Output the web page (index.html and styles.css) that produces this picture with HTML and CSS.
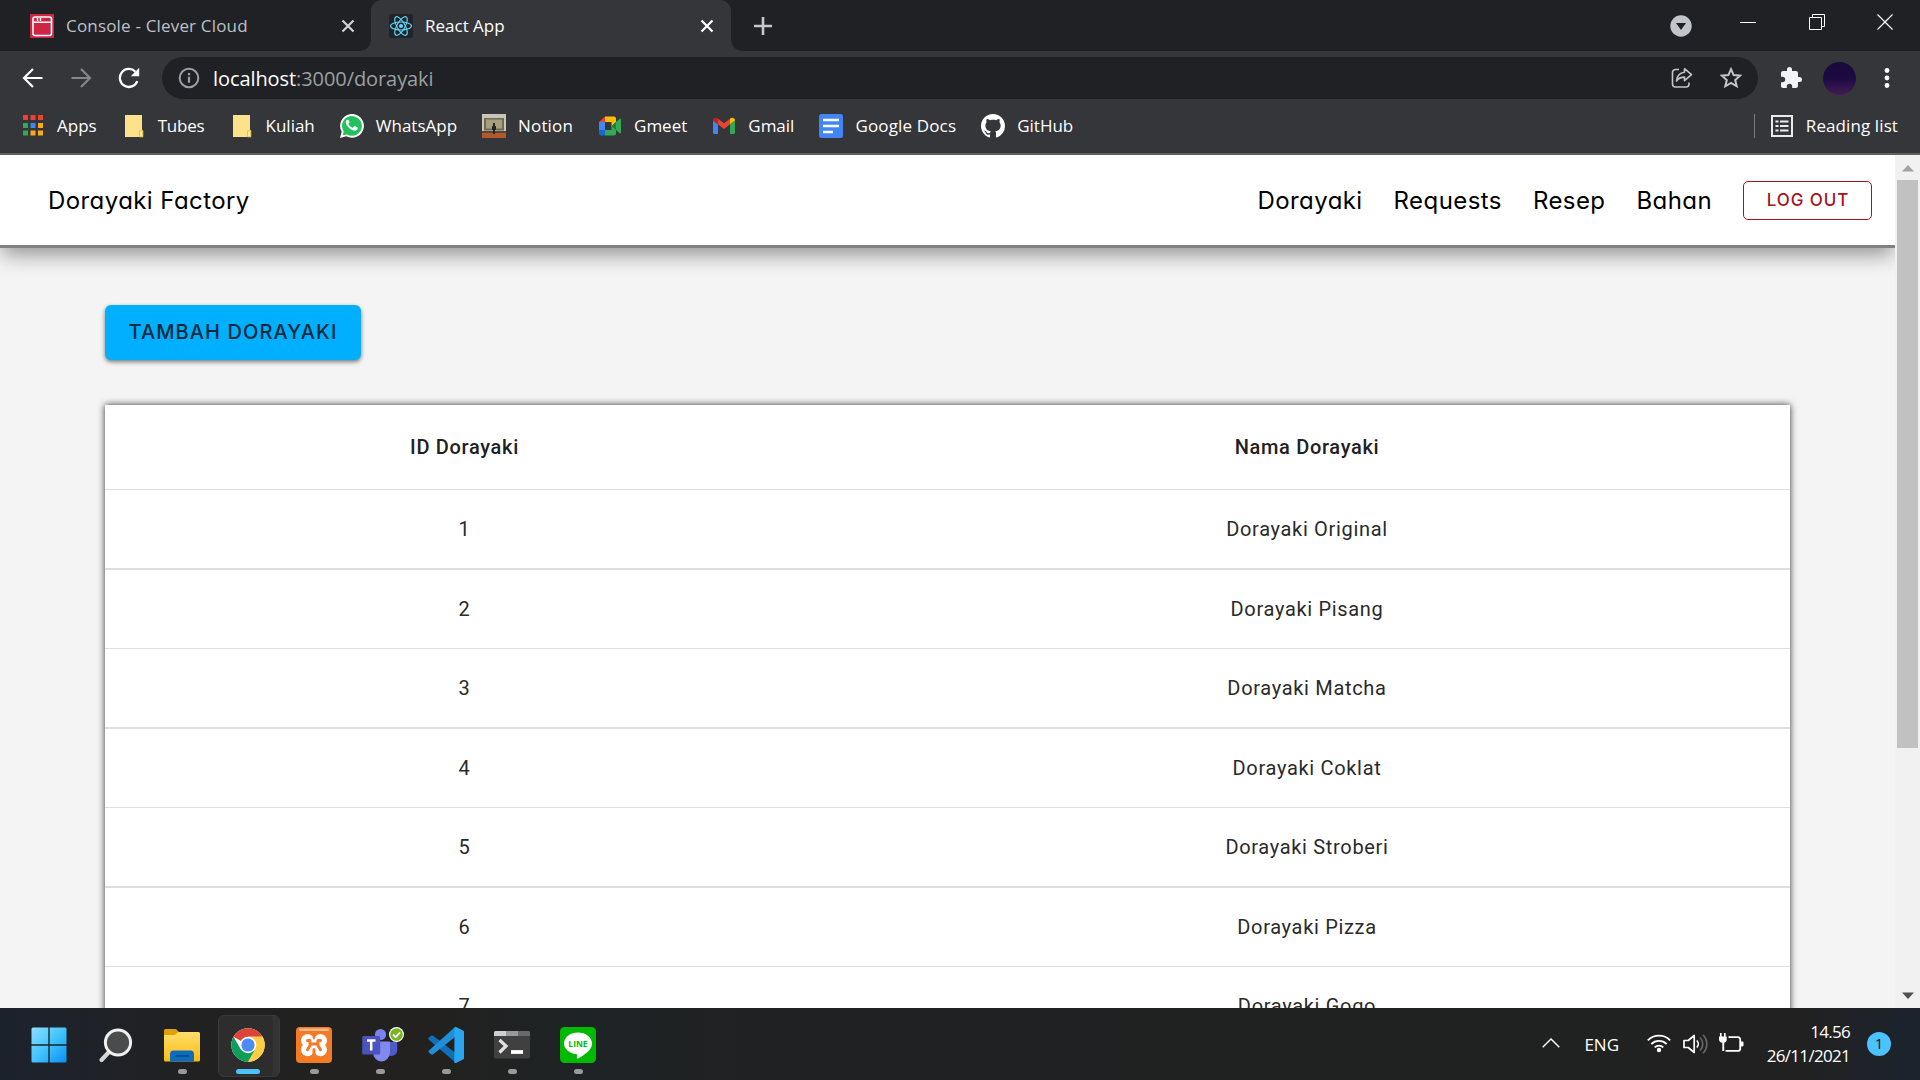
FILE: index.html
```html
<!DOCTYPE html>
<html lang="en">
<head>
<meta charset="utf-8">
<title>React App</title>
<link rel="stylesheet" href="styles.css">
</head>
<body>
<div class="screen">
  <header class="chrome">
    <div class="tabstrip">
      <div class="tab tab-idle">
        <svg class="favicon" viewBox="0 0 24 24"><rect width="24" height="24" fill="#ce2545"/><rect x="3" y="3" width="18.500" height="18.500" rx="2" fill="none" stroke="#fff" stroke-width="1.600"/><path d="M3 8.200h18.500M7.500 4v3M10.500 4v3" stroke="#fff" stroke-width="1.400"/></svg>
        <span class="tab-title title-console">Console - Clever Cloud</span>
        <svg class="tab-close" viewBox="0 0 14 14"><path d="M1.500 1.500l11 11M12.500 1.500l-11 11" stroke="#d0d2d5" stroke-width="2.200"/></svg>
      </div>
      <div class="tab tab-active">
        <svg class="favicon" viewBox="0 0 24 24"><rect width="24" height="24" rx="3" fill="#20232a"/><g fill="none" stroke="#61dafb" stroke-width="1.100"><ellipse cx="12" cy="12" rx="10.500" ry="4"/><ellipse cx="12" cy="12" rx="10.500" ry="4" transform="rotate(60 12 12)"/><ellipse cx="12" cy="12" rx="10.500" ry="4" transform="rotate(120 12 12)"/></g><circle cx="12" cy="12" r="2" fill="#61dafb"/></svg>
        <span class="tab-title title-react">React App</span>
        <svg class="tab-close" viewBox="0 0 14 14"><path d="M1.500 1.500l11 11M12.500 1.500l-11 11" stroke="#fff" stroke-width="2.200"/></svg>
      </div>
      <svg class="new-tab" viewBox="0 0 20 20"><path d="M10 1v18M1 10h18" stroke="#c6c8cc" stroke-width="2.600"/></svg>
      <div class="window-controls">
        <svg class="tab-search" viewBox="0 0 22 22"><circle cx="11" cy="11" r="10.700" fill="#c1c4c9"/><path d="M6 8h10l-5 7z" fill="#202124"/></svg>
        <svg class="win-btn" viewBox="0 0 16 16"><path d="M0 8.500h16" stroke="#fff"/></svg>
        <svg class="win-btn" viewBox="0 0 16 16"><path d="M.5 3.500h12v12H.5zM3.500 3.500v-3h12v12h-3" fill="none" stroke="#fff"/></svg>
        <svg class="win-btn" viewBox="0 0 16 16"><path d="M.5.5l15 15M15.500.5l-15 15" stroke="#fff" stroke-width="1.200"/></svg>
      </div>
    </div>
    <div class="toolbar">
      <svg class="nav-icon" viewBox="0 0 22 22"><path d="M20.500 11H2.500M11 2L2 11l9 9" fill="none" stroke="#fff" stroke-width="2.200"/></svg>
      <svg class="nav-icon" viewBox="0 0 22 22"><path d="M1.500 11h18M11 2l9 9-9 9" fill="none" stroke="#85878a" stroke-width="2.200"/></svg>
      <svg class="nav-icon" viewBox="0 0 22 22"><path d="M19.300 14.200A9 9 0 1 1 17.400 4.700" fill="none" stroke="#fff" stroke-width="2.300"/><path d="M21.200.8v8.400h-8.400z" fill="#fff"/></svg>
      <div class="omnibox">
        <svg class="info" viewBox="0 0 22 22"><circle cx="11" cy="11" r="9.300" fill="none" stroke="#9aa0a6" stroke-width="2"/><path d="M11 9.800v6M11 6v2.200" stroke="#9aa0a6" stroke-width="2.200"/></svg>
        <span class="url"><span class="host">localhost</span><span class="path">:3000/dorayaki</span></span>
        <svg class="omni-icon" viewBox="0 0 22 22"><path d="M8 2.500H4.500a3 3 0 0 0-3 3V17a3 3 0 0 0 3 3H15a3 3 0 0 0 3-3v-1.500" fill="none" stroke="#c3c5c8" stroke-width="1.600"/><path d="M13.500 1.700l7 6-7 6v-3.600c-4 0-6.300 1.200-8 3.900.4-4.700 3-8 8-8.700z" fill="none" stroke="#c3c5c8" stroke-width="1.600" stroke-linejoin="round"/></svg>
        <svg class="omni-icon" viewBox="0 0 22 22"><path d="M11 2.200l2.600 5.900 6.500.6-4.900 4.300 1.500 6.300-5.700-3.400-5.700 3.400 1.500-6.300L1.900 8.700l6.500-.6z" fill="none" stroke="#c3c5c8" stroke-width="2"/></svg>
      </div>
      <svg class="ext" viewBox="0 0 24 24"><path d="M20.500 11H19V7c0-1.100-.9-2-2-2h-4V3.500a2.500 2.500 0 0 0-5 0V5H4c-1.100 0-2 .9-2 2v3.800h1.500a2.700 2.700 0 0 1 0 5.400H2V20c0 1.100.9 2 2 2h3.800v-1.500a2.700 2.700 0 0 1 5.400 0V22H17c1.100 0 2-.9 2-2v-4h1.500a2.500 2.500 0 0 0 0-5z" fill="#f1f3f4"/></svg>
      <span class="avatar"></span>
      <svg class="menu" viewBox="0 0 6 22"><g fill="#fff"><circle cx="3" cy="3.500" r="2.400"/><circle cx="3" cy="11" r="2.400"/><circle cx="3" cy="18.500" r="2.400"/></g></svg>
    </div>
    <nav class="bookmarks">
      <a class="bm bm-apps"><svg viewBox="0 0 24 24"><g fill="#ea4335"><path d="M2 1h5v5H2zM9.500 1h5v5h-5zM17 1h5v5h-5z"/></g><path d="M2 9h5v5H2zM2 16.500h5v5H2z" fill="#34a853"/><path d="M9.500 9h5v5h-5z" fill="#4285f4"/><path d="M17 9h5v5h-5zM9.500 16.500h5v5h-5zM17 16.500h5v5h-5z" fill="#fbab18"/></svg><span>Apps</span></a>
      <a class="bm bm-tubes"><svg viewBox="0 0 24 24"><path d="M3 1h17v14.500l1 1V23H3z" fill="#fce28a"/><path d="M17.500 22.800v-6h3.300v6z" fill="#fde9a0" stroke="#e9c147"/></svg><span>Tubes</span></a>
      <a class="bm bm-kuliah"><svg viewBox="0 0 24 24"><path d="M3 1h17v14.500l1 1V23H3z" fill="#fce28a"/><path d="M17.500 22.800v-6h3.300v6z" fill="#fde9a0" stroke="#e9c147"/></svg><span>Kuliah</span></a>
      <a class="bm bm-wa"><svg viewBox="0 0 24 24"><path d="M0 24l1.700-6.200A11.900 11.900 0 1 1 6.300 22.300z" fill="#fff"/><path d="M2.700 21.300l1-3.900A9.900 9.900 0 1 1 7 20.500z" fill="#22c15e"/><path d="M8.700 6.400c-.3-.6-.5-.6-.9-.6-1.200 0-2 1.300-2 2.600 0 1.600 1.200 3.400 3.200 5.300 2.400 2.200 4.300 2.900 5.700 2.900 1.500 0 2.900-.9 3-2.200.1-.8 0-.9-.5-1.100l-2.400-1.100c-.4-.2-.6-.1-.8.2l-1 1.200c-.2.3-.4.300-.8.100-1.500-.7-2.900-1.900-3.700-3.400-.2-.4-.1-.5.100-.7l.9-1.100c.1-.2.100-.4 0-.6z" fill="#fff"/></svg><span>WhatsApp</span></a>
      <a class="bm bm-notion"><svg viewBox="0 0 24 24"><rect width="24" height="24" fill="#c9c5b8"/><rect x="2" y="4" width="20" height="12.500" fill="#6f6a52"/><rect x="4" y="5.500" width="16" height="9" fill="#a79f7c"/><path d="M0 19h24v5H0z" fill="#b4582a"/><path d="M0 17h24v2H0z" fill="#55483b"/><path d="M11 9h2v3h1v4h-1v4h-2v-4h-1v-4h1z" fill="#27242a"/></svg><span>Notion</span></a>
      <a class="bm bm-meet"><svg viewBox="0 0 24 24"><path d="M1 8l6-5.500V8z" fill="#ea4335"/><path d="M7 2.500h9c1 0 2 .8 2 2V9l-4.500 4V8H7z" fill="#fbbc04"/><path d="M1 8h6v8H1z" fill="#4285f4"/><path d="M1 16h6v5.500H3c-1.200 0-2-.8-2-2z" fill="#1967d2"/><path d="M7 16h6.500v-4L18 15v4.500c0 1.200-.9 2-2 2H7z" fill="#34a853"/><path d="M13.500 12L21.700 4.800c.6-.5 1.300-.2 1.300.6v13.200c0 .8-.7 1.100-1.300.6z" fill="#34a853"/><path d="M13.500 12L18 8v8z" fill="#188038"/></svg><span>Gmeet</span></a>
      <a class="bm bm-gmail"><svg viewBox="0 0 24 24"><path d="M1 6.500l5 3.800V20H2.500A1.500 1.500 0 0 1 1 18.500z" fill="#4285f4"/><path d="M18 10.300l5-3.800v12a1.500 1.500 0 0 1-1.500 1.500H18z" fill="#34a853"/><path d="M1 6.500C1 4 3.700 3 5.500 4.300L6 4.700v5.600L1 6.500z" fill="#c5221f"/><path d="M6 4.700l6 4.600 6-4.600v5.600L12 15l-6-4.700z" fill="#ea4335"/><path d="M18 4.700l.5-.4C20.300 3 23 4 23 6.500l-5 3.800z" fill="#fbbc04"/></svg><span>Gmail</span></a>
      <a class="bm bm-docs"><svg viewBox="0 0 24 24"><rect width="24" height="24" rx="2.500" fill="#4285f4"/><path d="M4 6h16M4 12h16M4 18h10" stroke="#fff" stroke-width="2.600"/></svg><span>Google Docs</span></a>
      <a class="bm bm-github"><svg viewBox="0 0 16 16"><path fill="#fff" d="M8 0C3.580 0 0 3.580 0 8c0 3.540 2.290 6.530 5.470 7.590.4.070.55-.17.55-.38 0-.19-.01-.82-.01-1.490-2.010.37-2.530-.49-2.690-.94-.09-.23-.48-.94-.82-1.130-.28-.15-.68-.52-.01-.53.63-.01 1.080.58 1.230.82.72 1.210 1.870.87 2.330.66.070-.52.28-.87.51-1.070-1.780-.2-3.640-.89-3.640-3.950 0-.87.31-1.590.82-2.150-.08-.2-.36-1.020.08-2.120 0 0 .67-.21 2.200.82.64-.18 1.320-.27 2-.27s1.360.09 2 .27c1.530-1.040 2.200-.82 2.200-.82.44 1.100.16 1.920.08 2.120.51.56.82 1.270.82 2.150 0 3.070-1.870 3.750-3.650 3.950.29.25.54.73.54 1.480 0 1.070-.01 1.930-.01 2.200 0 .21.15.46.55.38A8.010 8.010 0 0 0 16 8c0-4.420-3.580-8-8-8z"/></svg><span>GitHub</span></a>
      <a class="bm bm-reading"><svg viewBox="0 0 24 24"><rect x="2" y="2" width="20" height="20" fill="none" stroke="#e8eaed" stroke-width="2"/><path d="M5.500 7.500h3M5.500 12h3M5.500 16.500h3M10 7.500h8.500M10 12h8.500M10 16.500h8.500" stroke="#e8eaed" stroke-width="2.200"/></svg><span>Reading list</span></a>
    </nav>
  </header>

  <div class="viewport">
    <div class="page">
      <div class="navbar">
        <span class="brand">Dorayaki Factory</span>
        <div class="links">
          <a>Dorayaki</a><a>Requests</a><a>Resep</a><a>Bahan</a>
          <button class="logout">LOG OUT</button>
        </div>
      </div>
      <main class="content">
        <button class="add">TAMBAH DORAYAKI</button>
        <div class="table">
          <div class="row head"><span>ID Dorayaki</span><span>Nama Dorayaki</span></div>
          <div class="row"><span>1</span><span>Dorayaki Original</span></div>
          <div class="row"><span>2</span><span>Dorayaki Pisang</span></div>
          <div class="row"><span>3</span><span>Dorayaki Matcha</span></div>
          <div class="row"><span>4</span><span>Dorayaki Coklat</span></div>
          <div class="row"><span>5</span><span>Dorayaki Stroberi</span></div>
          <div class="row"><span>6</span><span>Dorayaki Pizza</span></div>
          <div class="row"><span>7</span><span>Dorayaki Gogo</span></div>
        </div>
      </main>
    </div>
    <div class="scrollbar">
      <svg viewBox="0 0 12 7"><path d="M0 6.500L6 0l6 6.500z" fill="#a3a3a3"/></svg>
      <div class="thumb"></div>
      <svg class="down" viewBox="0 0 12 7"><path d="M0 .5L6 7l6-6.500z" fill="#505050"/></svg>
    </div>
  </div>

  <footer class="taskbar">
    <div class="apps">
      <div class="app start"><svg viewBox="0 0 36 36"><defs><linearGradient id="win" x1="0" y1="0" x2="1" y2="1"><stop offset="0" stop-color="#8fe0ff"/><stop offset=".55" stop-color="#3cc0fa"/><stop offset="1" stop-color="#0a8df5"/></linearGradient></defs><path d="M2 .5h15.300v16.800H.5V2A1.500 1.500 0 0 1 2 .5zM18.700.5H34A1.500 1.500 0 0 1 35.500 2v15.300H18.700zM.5 18.700h16.800v16.800H2A1.500 1.500 0 0 1 .5 34zM18.700 18.700h16.800V34a1.500 1.500 0 0 1-1.500 1.500H18.700z" fill="url(#win)"/></svg></div>
      <div class="app"><svg viewBox="0 0 36 36"><path d="M11 25l-7.500 8" stroke="#d6d6d6" stroke-width="4.200" stroke-linecap="round"/><circle cx="20" cy="15.500" r="12.600" fill="#4a4b4d" stroke="#f0f0f0" stroke-width="3"/></svg></div>
      <div class="app run"><svg viewBox="0 0 36 36"><defs><linearGradient id="fold" x1="0" y1="0" x2="0" y2="1"><stop offset="0" stop-color="#ffdf6c"/><stop offset="1" stop-color="#fbbc12"/></linearGradient></defs><path d="M0 3.500A1.500 1.500 0 0 1 1.500 2H11c1.500 0 2.500 1.500 4 3v5H0z" fill="#e0a00e"/><path d="M0 8h10.500c1.500 0 2.500-3 5-3H34.500A1.500 1.500 0 0 1 36 6.500V33a1.500 1.500 0 0 1-1.500 1.500h-33A1.500 1.500 0 0 1 0 33z" fill="url(#fold)"/><path d="M6 34.500V27a3.500 3.500 0 0 1 3.500-3.500h17A3.500 3.500 0 0 1 30 27v7.500z" fill="#0f6cbd"/><path d="M11 29h14" stroke="#0b4a8a" stroke-width="1.600"/></svg></div>
      <div class="app run current"><svg viewBox="0 0 36 36"><circle cx="18" cy="18" r="16.700" fill="#fff"/><path d="M18 18L3.540 9.650A16.700 16.700 0 0 1 32.460 9.650H18z" fill="#db4437"/><path d="M18 9.650h14.460A16.700 16.700 0 0 1 18 34.700l7.230-12.520z" fill="#ffcd40"/><path d="M25.230 22.180L18 34.700A16.700 16.700 0 0 1 3.540 9.650l7.230 12.530z" fill="#0f9d58"/><circle cx="18" cy="18" r="8.300" fill="#fff"/><circle cx="18" cy="18" r="6.600" fill="#4c8bf5"/></svg></div>
      <div class="app run"><svg viewBox="0 0 36 36"><rect width="36" height="36" rx="4" fill="#f47b26"/><path d="M3 1.500h30v1c0 1-1 1.500-2 1.500H5c-1 0-2-.5-2-1.500z" fill="#fbb88a"/><g fill="#fff"><circle cx="11.500" cy="13.500" r="6.500"/><circle cx="24.500" cy="13.500" r="6.500"/><circle cx="11.500" cy="22.700" r="6.500"/><circle cx="24.500" cy="22.700" r="6.500"/><path d="M10 12h16v12H10z"/></g><path d="M18 26v-3.500" stroke="#f47b26" stroke-width="3" stroke-linecap="round"/><path d="M11.500 13.500h2.500v3.500h8v-3.500h2.500" fill="none" stroke="#f47b26" stroke-width="3" stroke-linejoin="round" stroke-linecap="round"/><path d="M11.500 22.800l2.500-4.300M24.500 22.800L22 18.500" stroke="#f47b26" stroke-width="3" stroke-linecap="round"/><path d="M16.500 10h3l-1.500 3z" fill="#f47b26"/></svg></div>
      <div class="app run"><svg class="teams" viewBox="0 0 42 36"><circle cx="18.500" cy="7.500" r="5.600" fill="#7b83eb"/><path d="M26 15h9.300v8a6 6 0 0 1-9.300 5z" fill="#5059c9"/><path d="M11 14.500h17v10.500a8.500 9.500 0 0 1-17 0z" fill="#8189ee"/><rect x=".2" y="9" width="18" height="18.500" rx="1.500" fill="#4b53bc"/><path d="M5 13.500h8.500M9.200 13.500v10" stroke="#fff" stroke-width="2.500"/><circle cx="34.500" cy="7.500" r="7.500" fill="#fff"/><circle cx="34.500" cy="7.500" r="6.300" fill="#76b51b"/><path d="M31 7.500l2.600 2.600 4.500-4.700" fill="none" stroke="#fff" stroke-width="1.900"/></svg></div>
      <div class="app run"><svg viewBox="0 0 36 36"><path d="M1 10.500l2-1.700c.7-.6 1.500-.5 2.200 0L27 25.500V35L.8 12.800c-.7-.7-.5-1.700.2-2.300z" fill="#0f72b8"/><path d="M27 0v10L5.200 27.300c-.7.500-1.500.5-2.200 0l-2-1.700c-.7-.7-.7-1.500 0-2.200z" fill="#1f90d8"/><path d="M26.500.6c.4-.6 1-.7 1.600-.5L35 3.500c.7.300 1 .8 1 1.500v26c0 .7-.3 1.200-1 1.500L28 36c-.7.200-1.300 0-1.700-.5z" fill="#2aa5f2"/></svg></div>
      <div class="app run"><svg viewBox="0 0 36 36"><rect y="4" width="36" height="27.500" rx="1.500" fill="#404040"/><path d="M0 9V5.500A1.500 1.500 0 0 1 1.500 4H12v5z" fill="#cfcfcf"/><path d="M12 4h12v5H12z" fill="#999"/><path d="M24 4h10.500A1.500 1.500 0 0 1 36 5.500V9H24z" fill="#6a6a6a"/><path d="M5.500 13l6.500 6-6.500 6.500" fill="none" stroke="#e2e2e2" stroke-width="3.200"/><path d="M17 25h12" stroke="#fff" stroke-width="3.800"/></svg></div>
      <div class="app run"><svg viewBox="0 0 36 36"><rect width="36" height="36" rx="4.500" fill="#00b900"/><path d="M18 5.500c7.700 0 14 4.900 14 11 0 2.500-1 4.700-3 6.900-2.900 3.300-9.300 7.200-11 8-1.500.6-1.100-.4-1.100-.8l.2-1.900c0-.6 0-1.200-.7-1.400C9.500 26.400 4 22 4 16.500c0-6.100 6.300-11 14-11z" fill="#fff"/><text x="18" y="20" text-anchor="middle" class="line-logo">LINE</text></svg></div>
    </div>
    <div class="tray">
      <svg class="t-chev" viewBox="0 0 18 10"><path d="M.7 9.300L9 1l8.300 8.300" fill="none" stroke="#fff" stroke-width="1.400"/></svg>
      <span class="lang">ENG</span>
      <svg class="t-wifi" viewBox="0 0 24 20"><g fill="none" stroke="#fff" stroke-width="1.800"><path d="M.8 7.300a15.800 15.800 0 0 1 22.400 0M4.300 11a10.900 10.900 0 0 1 15.400 0M7.700 14.300a6.100 6.100 0 0 1 8.600 0"/></g><circle cx="12" cy="17" r="2.200" fill="#fff"/></svg>
      <svg class="t-vol" viewBox="0 0 25 20"><path d="M1 6.500h4.200l6-5v17l-6-5H1z" fill="none" stroke="#fff" stroke-width="1.700" stroke-linejoin="round"/><path d="M13.800 6.500a5 5 0 0 1 0 7" fill="none" stroke="#fff" stroke-width="1.700"/><path d="M17 3.500a9 9 0 0 1 0 13M20 .8a13 13 0 0 1 0 18.400" fill="none" stroke="#666" stroke-width="1.700"/></svg>
      <svg class="t-bat" viewBox="0 0 25 20"><path d="M1.800 0v4M5.800 0v4" stroke="#fff" stroke-width="1.700"/><path d="M0 3.500h7.700v3.700a3 3 0 0 1-2.500 2.500V18H3.300V9.700A3.500 3.500 0 0 1 0 6.500z" fill="#fff"/><path d="M9.500 4.200H19a2.200 2.200 0 0 1 2.200 2.200v9.300a2.200 2.200 0 0 1-2.200 2.200H6.500" fill="none" stroke="#fff" stroke-width="1.800"/><path d="M21.500 8.500h1.800c.7 0 1.200.5 1.200 1.200v2.600c0 .7-.5 1.200-1.200 1.200h-1.800z" fill="#fff"/></svg>
      <div class="clock"><span class="time">14.56</span><span class="date">26/11/2021</span></div>
      <span class="badge">1</span>
    </div>
  </footer>
</div>
</body>
</html>
```
FILE: styles.css
```css
* { box-sizing: border-box; }
body { margin: 0; background: #202124; font-family: "Open Sans", "Noto Sans", sans-serif; }
svg { display: block; flex: none; }
span, a { white-space: nowrap; }
.screen { width: 1920px; height: 1080px; overflow: hidden; display: flex; flex-direction: column; }

/* Browser frame */
.chrome { height: 155px; background: #35363a; border-bottom: 2px solid #5f6064; color: #fff; }
.tabstrip { height: 51px; background: #202124; display: flex; align-items: center; }
.tab { height: 51px; display: flex; align-items: center; }
.tab-idle { width: 371px; padding: 0 16px 0 30px; color: #bdc1c6; }
.tab-active { width: 360px; padding: 0 17px 0 18px; background: #35363a; border-radius: 11px 11px 0 0; position: relative; }
.tab-active::before, .tab-active::after { content: ""; position: absolute; bottom: 0; width: 11px; height: 11px; }
.tab-active::before { left: -11px; background: radial-gradient(circle at 0 0, transparent 10.500px, #35363a 11px); }
.tab-active::after { right: -11px; background: radial-gradient(circle at 100% 0, transparent 10.500px, #35363a 11px); }
.favicon { width: 24px; height: 24px; margin-right: 12px; }
.tab-title { font-size: 17px; flex: 1; }
.title-console { letter-spacing: .18px; }
.tab-close { width: 14px; height: 14px; }
.new-tab { width: 20px; height: 20px; margin-left: 22px; }
.window-controls { margin-left: auto; height: 51px; display: flex; align-items: center; padding-right: 27px; }
.tab-search { width: 22px; height: 22px; margin-right: 48px; }
.win-btn { width: 16px; height: 16px; margin-left: 52.500px; margin-bottom: 8px; }
.tab-search + .win-btn { margin-left: 0; }

.toolbar { height: 54px; display: flex; align-items: center; padding: 0 30px 0 22px; }
.nav-icon { width: 22px; height: 22px; margin-right: 26px; }
.omnibox { width: 1596px; height: 42px; margin-left: -4px; border-radius: 21px; background: #202124; display: flex; align-items: center; padding: 0 16px; }
.info { width: 22px; height: 22px; margin-right: 13px; }
.url { flex: 1; font-size: 20px; letter-spacing: -.08px; }
.path { color: #9aa0a6; }
.omni-icon { width: 22px; height: 22px; margin-left: 27px; }
.ext { width: 24px; height: 24px; margin-left: 21px; }
.avatar { width: 33px; height: 33px; margin-left: 20px; border-radius: 50%; background: linear-gradient(#180a3c, #1d0a42 50%, #441b57); }
.menu { width: 6px; height: 22px; margin-left: auto; }

.bookmarks { height: 48px; display: flex; align-items: center; padding: 0 22px 6px 21px; font-size: 17px; }
.bm { display: flex; align-items: center; gap: 12px; height: 42px; margin-right: 25px; }
.bm svg { width: 24px; height: 24px; }
.bm span { margin-top: -2px; }
.bm-tubes { letter-spacing: -.2px; }
.bm-notion { letter-spacing: .15px; }
.bm-docs { letter-spacing: .15px; }
.bm-reading { margin: 0 0 0 auto; position: relative; letter-spacing: .1px; }
.bm-reading::before { content: ""; position: absolute; left: -16px; top: 9px; width: 1px; height: 24px; background: #77797d; }

/* Web page */
.viewport { height: 853px; display: flex; overflow: hidden; }
.page { width: 1895px; background: #f4f4f4; overflow: hidden; }
.navbar { height: 93px; background: #fff; border-bottom: 3px solid #808080; box-shadow: 0 8px 20px -2px rgba(0, 0, 0, .42); display: flex; align-items: center; justify-content: space-between; padding: 0 23px 0 48px; font: 400 24px Inter, sans-serif; font-feature-settings: "cv11"; letter-spacing: .42px; color: #000; }
.links { display: flex; align-items: center; gap: 31px; }
.logout { width: 129px; height: 39px; padding: 0 0 0 1px; border: 1px solid #a3151b; border-radius: 5px; background: #fff; color: #a3151b; font: 450 17px Inter, sans-serif; letter-spacing: .9px; }
.content { padding: 57px 105px 0; }
.add { display: block; width: 256px; height: 55px; padding: 0 0 2px; border: 0; border-radius: 6px; background: #00b0ff; color: #05283c; font: 450 20px Inter, sans-serif; letter-spacing: 1.1px; box-shadow: 0 2px 4px rgba(0, 0, 0, .5); }
.table { margin-top: 45px; width: 1685px; background: #fff; box-shadow: 0 0 7px rgba(0, 0, 0, .8); font: 20px Roboto, sans-serif; color: #2a2a2a; letter-spacing: .68px; }
.row { display: grid; grid-template-columns: 718px 967px; height: 79px; align-items: center; justify-items: center; border-bottom: 1px solid #dedede; }
.row span { padding-left: 1px; }
.row:nth-child(even) { height: 80px; border-bottom-width: 2px; }
.row.head { height: 85px; font-weight: 500; color: #212121; }

.scrollbar { width: 25px; background: #f1f1f1; display: flex; flex-direction: column; align-items: center; padding: 10px 0 9px; }
.scrollbar svg { width: 12px; height: 7px; }
.thumb { width: 21px; height: 568px; margin-top: 8px; background: #c1c1c1; }
.scrollbar .down { margin-top: auto; }

/* Taskbar */
.taskbar { height: 72px; display: flex; justify-content: space-between; background: linear-gradient(90deg, #1c222d, #212122 10%, #22211f 22%, #1e2325 30%, #202122 40%, #212121 94%, #1c232e); color: #fff; }
.apps { display: flex; padding-left: 17px; }
.app { width: 66px; height: 72px; padding: 19px 15px 0; position: relative; }
.app svg { width: 36px; height: 36px; }
.start svg { margin-left: -1px; }
.run::after { content: ""; position: absolute; left: 29px; top: 61px; width: 9px; height: 5px; border-radius: 3px; background: #9a9a9a; }
.current::before { content: ""; position: absolute; left: 3px; top: 7px; width: 60px; height: 60px; border-radius: 6px; background: #2d2d2d; border: 1px solid #3a3a3a; box-shadow: inset -7px 0 0 -1px #343434; }
.current svg { position: relative; }
.run.current::after { left: 21px; width: 24px; background: #4cc2ff; }
.app .teams { width: 42px; }
.line-logo { font: 700 8.500px "Open Sans", sans-serif; fill: #00b900; }
.tray { display: flex; align-items: center; padding-right: 29px; }
.t-chev { width: 18px; height: 10px; margin: 0 24px 2px 0; }
.lang { font-size: 17px; }
.t-wifi { width: 24px; height: 20px; margin: 0 12px 2px 28px; }
.t-vol { width: 25px; height: 20px; margin-right: 11px; }
.t-bat { width: 25px; height: 20px; margin-bottom: 3px; }
.clock { width: 106px; display: flex; flex-direction: column; align-items: flex-end; font-size: 17px; line-height: 24px; letter-spacing: -.7px; }
.badge { width: 24px; height: 24px; margin-left: 17px; border-radius: 50%; background: #4cc2ff; color: #111; font-size: 15px; line-height: 23px; text-align: center; }
```
